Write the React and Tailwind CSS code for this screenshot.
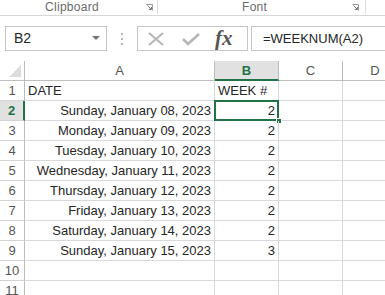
import React from "react";

const rows = [
  ["DATE", "WEEK #"],
  ["Sunday, January 08, 2023", "2"],
  ["Monday, January 09, 2023", "2"],
  ["Tuesday, January 10, 2023", "2"],
  ["Wednesday, January 11, 2023", "2"],
  ["Thursday, January 12, 2023", "2"],
  ["Friday, January 13, 2023", "2"],
  ["Saturday, January 14, 2023", "2"],
  ["Sunday, January 15, 2023", "3"],
  ["", ""],
  ["", ""],
];

function Launcher() {
  return (
    <svg width="7" height="7" viewBox="0 0 7 7" className="block">
      <path d="M0.5 0.5h6v6" fill="none" stroke="#9a9a9a" strokeWidth="1" />
      <path d="M1.5 1.5l4 4M3 5.5h2.5V3" fill="none" stroke="#7a7a7a" strokeWidth="1" />
    </svg>
  );
}

export default function App() {
  return (
    <div className="w-[385px] h-[295px] overflow-hidden bg-white text-[#262626] font-['Liberation_Sans',sans-serif]">
      {/* Ribbon group labels */}
      <div className="flex h-[16px] border-b border-[#d6d6d6] text-[12px] text-[#6a6a6a] leading-[14px]">
        <div className="w-[157px] flex items-start relative">
          <span className="ml-[45px] tracking-[0.3px]">Clipboard</span>
          <div className="absolute left-[146px] top-[4px]"><Launcher /></div>
        </div>
        <div className="w-px h-[14px] bg-[#dcdcdc]" />
        <div className="w-[207px] relative">
          <span className="ml-[84px] tracking-[0.3px]">Font</span>
          <div className="absolute left-[194px] top-[4px]"><Launcher /></div>
        </div>
        <div className="w-px h-[14px] bg-[#dcdcdc]" />
      </div>

      {/* Formula bar */}
      <div className="flex items-center mt-[10px] h-[25px]">
        <div className="ml-[5px] w-[102px] h-[25px] border border-[#c6c6c6] flex items-center justify-between pl-[8px] pr-[6px] text-[14px]">
          <span>B2</span>
          <svg width="8" height="5" viewBox="0 0 8 5"><path d="M0 0h8L4 4z" fill="#777" /></svg>
        </div>
        <div className="ml-[14px] w-[3px] flex flex-col gap-[3px]">
          <div className="w-[2px] h-[2px] bg-[#b8b8b8]" />
          <div className="w-[2px] h-[2px] bg-[#b8b8b8]" />
          <div className="w-[2px] h-[2px] bg-[#b8b8b8]" />
        </div>
        <div className="ml-[13px] w-[111px] h-[25px] border border-[#c6c6c6] flex items-center">
          <svg width="16" height="14" viewBox="0 0 16 14" className="ml-[10px]">
            <path d="M1 1l14 12M15 1L1 13" stroke="#b5b5b5" strokeWidth="2" fill="none" />
          </svg>
          <svg width="18" height="14" viewBox="0 0 18 14" className="ml-[18px]">
            <path d="M1 7l5 5L17 2" stroke="#b5b5b5" strokeWidth="2.6" fill="none" />
          </svg>
          <span className="ml-[15px] font-['Liberation_Serif',serif] italic font-bold text-[21px] text-[#555] leading-none">fx</span>
        </div>
        <div className="ml-[3px] flex-1 h-[25px] border border-r-0 border-[#c6c6c6] flex items-center pl-[11px] text-[13px]">
          =WEEKNUM(A2)
        </div>
      </div>

      {/* Grid */}
      <div className="mt-[10px] grid grid-cols-[25px_190px_64px_64px_64px] text-[13px] leading-[20px]">
        <div className="h-[20px] border-b border-r border-[#bdbdbd] flex items-end justify-end pr-[3px] pb-[3px]">
          <svg width="12" height="12" viewBox="0 0 12 12"><path d="M12 0V12H0z" fill="#dcdcdc" /></svg>
        </div>
        <div className="h-[20px] border-b border-r border-[#bdbdbd] text-center text-[#555]">A</div>
        <div className="h-[20px] border-b-2 border-b-[#217346] border-r border-r-[#bdbdbd] bg-[#e1e1e1] text-center text-[#217346] font-bold">B</div>
        <div className="h-[20px] border-b border-r border-[#bdbdbd] text-center text-[#555]">C</div>
        <div className="h-[20px] border-b border-[#bdbdbd] text-center text-[#555]">D</div>

        {rows.map((r, i) => {
          const sel = i === 1;
          return (
            <React.Fragment key={i}>
              <div
                className={
                  sel
                    ? "h-[20px] border-b border-[#d4d4d4] border-r-2 border-r-[#217346] bg-[#e1e1e1] text-center text-[#217346] font-bold"
                    : "h-[20px] border-b border-r border-[#d4d4d4] border-r-[#bdbdbd] text-center text-[#555]"
                }
              >
                {i + 1}
              </div>
              <div className={"h-[20px] border-b border-r border-[#d9d9d9] px-[3px] whitespace-nowrap " + (i === 0 ? "text-left" : "text-right")}>
                {r[0]}
              </div>
              <div className={"relative h-[20px] border-b border-r border-[#d9d9d9] px-[3px] " + (i === 0 ? "text-left" : "text-right")}>
                {r[1]}
                {sel && (
                  <>
                    <div className="absolute -left-px -top-px -right-px -bottom-px border-2 border-[#217346]" />
                    <div className="absolute -right-[4px] -bottom-[4px] w-[6px] h-[6px] bg-[#217346] border border-white" />
                  </>
                )}
              </div>
              <div className="h-[20px] border-b border-r border-[#d9d9d9]" />
              <div className="h-[20px] border-b border-[#d9d9d9]" />
            </React.Fragment>
          );
        })}
      </div>
    </div>
  );
}
